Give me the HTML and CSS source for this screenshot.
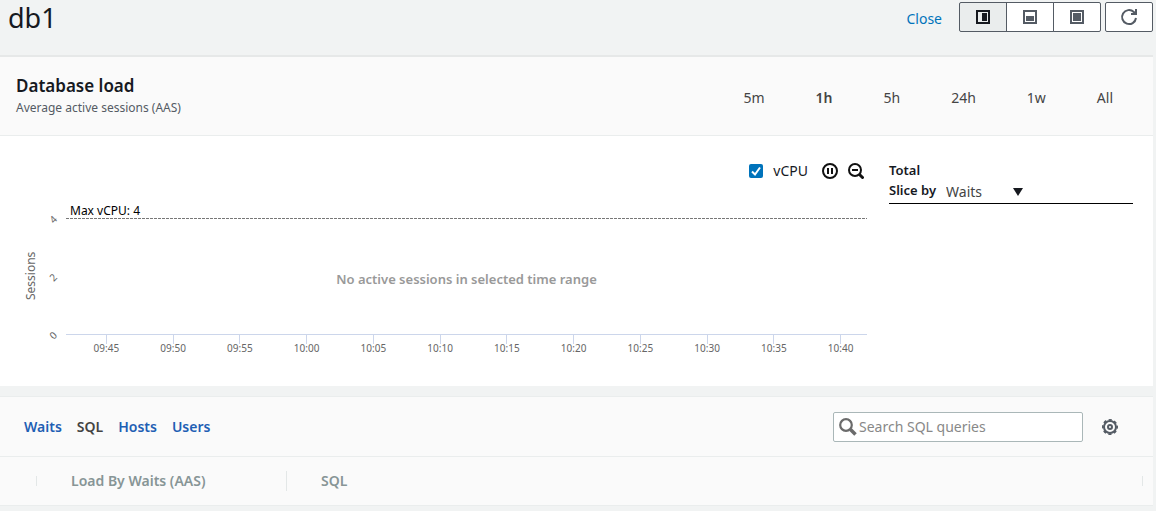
FILE: index.html
```html
<!DOCTYPE html>
<html lang="en">
<head>
<meta charset="utf-8">
<meta name="viewport" content="width=device-width, initial-scale=1">
<title>db1 - Database load</title>
<link rel="stylesheet" href="styles.css">
</head>
<body>
<header class="topbar">
  <h1 class="topbar-title">db1</h1>
  <div class="topbar-actions">
    <a class="close-link" href="#">Close</a>
    <div class="segmented">
      <button class="icon-button selected" type="button" aria-label="Side panel" aria-pressed="true">
        <svg width="14" height="14" viewBox="0 0 14 14"><path fill="none" stroke="currentColor" stroke-width="2" d="M1 1h12v12H1z"/><path fill="currentColor" d="M6 3h5v8H6z"/></svg>
      </button>
      <button class="icon-button" type="button" aria-label="Bottom panel">
        <svg width="14" height="14" viewBox="0 0 14 14"><path fill="none" stroke="currentColor" stroke-width="2" d="M1 1h12v12H1z"/><path fill="currentColor" d="M3 6h8v5H3z"/></svg>
      </button>
      <button class="icon-button" type="button" aria-label="Full panel">
        <svg width="14" height="14" viewBox="0 0 14 14"><path fill="none" stroke="currentColor" stroke-width="2" d="M1 1h12v12H1z"/><path fill="currentColor" d="M3 3h8v8H3z"/></svg>
      </button>
    </div>
    <button class="icon-button refresh" type="button" aria-label="Refresh">
      <svg width="18" height="18" viewBox="0 0 18 18" fill="none" stroke="currentColor" stroke-width="2"><path d="M16 10a7 7 0 1 1-2.200-6.100l1.700 1.600"/><path d="M16 1v5h-5"/></svg>
    </button>
  </div>
</header>

<section class="panel">
  <div class="panel-header">
    <div>
      <h2 class="panel-title">Database load</h2>
      <p class="panel-subtitle">Average active sessions (AAS)</p>
    </div>
    <div class="ranges">
      <button class="range" type="button">5m</button>
      <button class="range active" type="button">1h</button>
      <button class="range" type="button">5h</button>
      <button class="range" type="button">24h</button>
      <button class="range" type="button">1w</button>
      <button class="range" type="button">All</button>
    </div>
  </div>

  <div class="load">
    <div class="chart">
      <div class="chart-tools">
        <input class="check" type="checkbox" id="vcpu" checked>
        <label class="check-label" for="vcpu">vCPU</label>
        <button class="tool" type="button" aria-label="Pause">
          <svg width="16" height="16" viewBox="0 0 16 16"><circle cx="8" cy="8" r="7" fill="none" stroke="currentColor" stroke-width="2"/><path fill="currentColor" d="M5 5h2v6H5zM9 5h2v6H9z"/></svg>
        </button>
        <button class="tool" type="button" aria-label="Zoom out">
          <svg width="16" height="16" viewBox="0 0 16 16" fill="none" stroke="currentColor"><circle cx="7" cy="7" r="6" stroke-width="2"/><path stroke-width="2" d="M4 7h6"/><path stroke-width="3" stroke-linecap="round" d="M12 12l2.500 2.500"/></svg>
        </button>
      </div>
      <div class="graph">
        <div class="axis-title">Sessions</div>
        <div class="y-axis"><span>4</span><span>2</span><span>0</span></div>
        <div class="plot-column">
          <div class="limit-label">Max vCPU: 4</div>
          <div class="plot"><p class="empty">No active sessions in selected time range</p></div>
          <div class="x-axis">
            <span>09:45</span><span>09:50</span><span>09:55</span><span>10:00</span><span>10:05</span><span>10:10</span><span>10:15</span><span>10:20</span><span>10:25</span><span>10:30</span><span>10:35</span><span>10:40</span>
          </div>
        </div>
      </div>
    </div>
    <div class="legend">
      <p class="legend-total">Total</p>
      <div class="slice">
        <label class="slice-label" for="slice">Slice by</label>
        <select class="slice-select" id="slice"><option>Waits</option><option>SQL</option><option>Hosts</option><option>Users</option></select>
      </div>
    </div>
  </div>
</section>

<section class="panel top-items">
  <div class="items-header">
    <nav class="tabs">
      <a class="tab" href="#">Waits</a>
      <a class="tab current" href="#" aria-current="page">SQL</a>
      <a class="tab" href="#">Hosts</a>
      <a class="tab" href="#">Users</a>
    </nav>
    <div class="items-actions">
      <label class="search">
        <svg width="18" height="18" viewBox="0 0 18 18" fill="none" stroke="currentColor"><circle cx="7" cy="7" r="5.800" stroke-width="2.200"/><path stroke-width="3.600" d="M11.500 11.500l5 5"/></svg>
        <input class="search-input" type="text" placeholder="Search SQL queries" aria-label="Search SQL queries">
      </label>
      <button class="settings" type="button" aria-label="Settings">
        <svg width="16" height="16" viewBox="0 0 16 16" fill="none" stroke="currentColor" stroke-linejoin="round"><circle cx="8" cy="8" r="6" stroke-width="2"/><circle cx="8" cy="8" r="7.200" stroke-width="1.600" stroke-dasharray="3.200 2.455" stroke-dashoffset="1.600"/><circle cx="8" cy="8" r="2" stroke-width="2"/></svg>
      </button>
    </div>
  </div>
  <table class="items">
    <thead>
      <tr><th class="col-handle"></th><th class="col-load">Load By Waits (AAS)</th><th class="col-sql">SQL</th><th class="col-end"></th></tr>
    </thead>
  </table>
</section>
</body>
</html>
```
FILE: styles.css
```css
* {
  box-sizing: border-box;
}

body {
  margin: 0;
  padding-right: 3px;
  background: #f1f3f3;
  color: #16191f;
  font: 14px/20px "Noto Sans", "Open Sans", sans-serif;
}

h1, h2, p {
  margin: 0;
}

button, input, select {
  margin: 0;
  font: inherit;
  color: inherit;
}

a {
  text-decoration: none;
}

svg {
  display: block;
}

.topbar {
  display: flex;
  justify-content: space-between;
  align-items: flex-start;
  height: 55px;
  padding: 2px 0 0 8px;
}

.topbar-title {
  font-size: 27px;
  line-height: 32px;
  font-weight: 400;
}

.topbar-actions {
  display: flex;
  align-items: center;
}

.close-link {
  margin-right: 17px;
  padding-top: 4px;
  color: #0073bb;
}

.segmented {
  display: flex;
  margin-right: 4px;
}

.icon-button {
  display: flex;
  align-items: center;
  justify-content: center;
  width: 48px;
  height: 30px;
  padding: 0;
  border: 1px solid #545b64;
  background: #fff;
  color: #545b64;
}

.segmented .icon-button + .icon-button {
  margin-left: -1px;
}

.segmented .icon-button:first-child,
.refresh {
  border-top-left-radius: 2px;
  border-bottom-left-radius: 2px;
}

.segmented .icon-button:last-child,
.refresh {
  border-top-right-radius: 2px;
  border-bottom-right-radius: 2px;
}

.icon-button.selected {
  background: #eaeded;
  color: #16191f;
}

.panel {
  background: #fff;
}

.panel-header {
  display: flex;
  justify-content: space-between;
  align-items: center;
  height: 81px;
  padding: 4px 40px 0 16px;
  border-top: 2px solid #e6e8e8;
  border-bottom: 1px solid #eaeded;
  background: #fafafa;
}

.panel-title {
  padding-bottom: 2px;
  font-size: 17px;
  line-height: 20px;
  font-weight: 600;
}

.panel-subtitle {
  padding-bottom: 2px;
  font-size: 12px;
  line-height: 20px;
  color: #545b64;
}

.ranges {
  display: flex;
  gap: 51px;
}

.range {
  padding: 0;
  border: 0;
  background: none;
  color: #444;
}

.range.active {
  font-weight: 600;
}

.load {
  display: flex;
  gap: 22px;
  height: 250px;
  padding: 25px 20px 0 24px;
}

.chart {
  flex: 1;
}

.chart-tools {
  display: flex;
  align-items: center;
  justify-content: flex-end;
  height: 20px;
  padding-right: 3px;
}

.check {
  appearance: none;
  width: 14px;
  height: 14px;
  border-radius: 2px;
  background: #fff;
}

.check:checked {
  background: #0073bb url("data:image/svg+xml,%3Csvg xmlns='http://www.w3.org/2000/svg' viewBox='0 0 14 14'%3E%3Cpath d='M3 7.500l3 3 5-7' fill='none' stroke='white' stroke-width='2'/%3E%3C/svg%3E");
}

.check-label {
  margin: 0 14px 0 10px;
}

.tool {
  padding: 0;
  border: 0;
  background: none;
  color: #111;
}

.tool + .tool {
  margin-left: 10px;
}

.graph {
  display: flex;
  padding-top: 20px;
}

.axis-title {
  width: 14px;
  margin-top: 16px;
  height: 118px;
  writing-mode: vertical-rl;
  transform: rotate(180deg);
  text-align: center;
  font-size: 12px;
  line-height: 14px;
  color: #666;
}

.y-axis {
  display: flex;
  flex-direction: column;
  justify-content: space-between;
  width: 28px;
  height: 126px;
  margin-top: 13px;
  padding-left: 12px;
  font-size: 10px;
  line-height: 10px;
  color: #666;
}

.y-axis span {
  width: 6px;
  transform: rotate(-45deg);
}

.plot-column {
  flex: 1;
}

.limit-label {
  height: 17px;
  padding-left: 4px;
  font-size: 12px;
  line-height: 20px;
  color: #000;
}

.plot {
  display: flex;
  align-items: center;
  justify-content: center;
  height: 117px;
  padding-top: 5px;
  background: repeating-linear-gradient(90deg, #777 0 3px, transparent 3px 4px) top / 100% 1px no-repeat;
  border-bottom: 1px solid #ccd6eb;
}

.empty {
  font-size: 13px;
  font-weight: 600;
  color: #999;
}

.x-axis {
  display: flex;
  margin: 0 -7px 0 7px;
  font-size: 10px;
  line-height: 10px;
  color: #666;
}

.x-axis span {
  flex: 1;
  padding-top: 8px;
  text-align: center;
  background: linear-gradient(#ccd6eb, #ccd6eb) top / 1px 9px no-repeat;
}

.legend {
  width: 244px;
}

.legend-total,
.slice-label {
  font-size: 13px;
  line-height: 19px;
  font-weight: 600;
}

.slice {
  display: flex;
  height: 24px;
  border-bottom: 1px solid #000;
}

.slice-label {
  margin-right: 10px;
  line-height: 20px;
}

.slice-select {
  appearance: none;
  width: 77px;
  height: 23px;
  padding: 0;
  border: 0;
  background: url("data:image/svg+xml,%3Csvg xmlns='http://www.w3.org/2000/svg' viewBox='0 0 10 8'%3E%3Cpath d='M0 0h10L5 8z' fill='%2316191f'/%3E%3C/svg%3E") right center / 10px 8px no-repeat;
  color: #444;
}

.top-items {
  margin-top: 10px;
  border-top: 1px solid #eaeded;
  background: #fafafa;
}

.items-header {
  display: flex;
  justify-content: space-between;
  align-items: center;
  height: 60px;
  padding: 0 35px 0 24px;
  border-bottom: 1px solid #eaeded;
}

.tabs {
  display: flex;
  gap: 15px;
}

.tab {
  font-weight: 600;
  color: #1f5fb4;
}

.tab.current {
  color: #444;
}

.items-actions {
  display: flex;
  align-items: center;
  gap: 19px;
}

.search {
  display: flex;
  align-items: center;
  gap: 2px;
  width: 250px;
  height: 30px;
  padding: 0 5px;
  border: 1px solid #aab7b8;
  border-radius: 2px;
  background: #fff;
  color: #6b6b6b;
}

.search-input {
  flex: 1;
  min-width: 0;
  padding: 0;
  border: 0;
  outline: 0;
  background: none;
}

.search-input::placeholder {
  color: #888;
}

.settings {
  padding: 0;
  border: 0;
  background: none;
  color: #545b64;
}

.items {
  width: 100%;
  border-collapse: collapse;
  table-layout: fixed;
  border-bottom: 1px solid #eaeded;
}

.items th {
  height: 48px;
  padding: 0 0 0 34px;
  text-align: left;
  font-weight: 600;
  color: #879596;
  background: linear-gradient(#e3e7e7, #e3e7e7) right center / 1px 10px no-repeat;
}

.items .col-handle {
  width: 37px;
  padding: 0;
}

.items .col-load {
  width: 250px;
  background-size: 1px 20px;
}

.items .col-end {
  width: 10px;
  padding: 0;
  background: none;
}
```
